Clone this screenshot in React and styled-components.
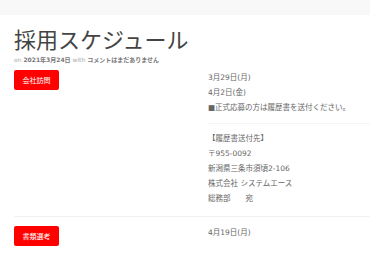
import React from 'react';
import styled, { createGlobalStyle } from 'styled-components';

const GlobalStyle = createGlobalStyle`
    body {
        margin: 0;
        background: #fff;
        font-family: "DejaVu Sans", "Noto Sans CJK JP", sans-serif;
        color: #666;
    }
`

const TopStrip = styled.div`
    height: 15px;
    background: #f8f8f8;
`

const Page = styled.div`
    padding-left: 14px;
`

const Title = styled.h1`
    margin: 9px 0 0;
    font-family: "Noto Sans CJK JP", sans-serif;
    font-size: 22px;
    line-height: 28px;
    font-weight: 400;
    color: #444;
`

const Meta = styled.div`
    margin-top: 3px;
    font-size: 6px;
    line-height: 10px;
    color: #aaa;

    b {
        font-weight: 700;
        color: #777;
    }
`

const Row = styled.div`
    display: grid;
    grid-template-columns: 194px 1fr;
    padding: ${p => p.$top}px 0 10px;
    border-top: ${p => p.$line ? '1px solid #f2f2f2' : 'none'};
`

const Badge = styled.span`
    display: flex;
    align-items: center;
    justify-content: center;
    width: 45px;
    height: 20px;
    margin-top: ${p => p.$offset}px;
    background: #ff0000;
    color: #fff;
    font-family: "Noto Sans CJK JP", sans-serif;
    font-size: 7px;
    border-radius: 2px;
`

const Cell = styled.div`
    font-size: 7.5px;
    line-height: 15px;
    color: #666;
`

const Block = styled.div`
    padding-bottom: ${p => p.$gap ? 8 : 0}px;
    margin-bottom: ${p => p.$gap ? 7 : 0}px;
    border-bottom: ${p => p.$gap ? '1px solid #f4f4f4' : 'none'};
`

const Line = styled.div`
    white-space: pre;
`

function App() {
    return (
        <>
            <GlobalStyle />
            <TopStrip />
            <Page>
                <Title>採用スケジュール</Title>
                <Meta>on <b>2021年3月24日</b> with <b>コメントはまだありません</b></Meta>
                <Row $top={5}>
                    <div><Badge $offset={0}>会社訪問</Badge></div>
                    <Cell>
                        <Block $gap>
                            <Line>3月29日(月)</Line>
                            <Line>4月2日(金)</Line>
                            <Line>■正式応募の方は履歴書を送付ください。</Line>
                        </Block>
                        <Block>
                            <Line>【履歴書送付先】</Line>
                            <Line>〒955-0092</Line>
                            <Line>新潟県三条市須頃2-106</Line>
                            <Line>株式会社 システムエース</Line>
                            <Line>総務部　　宛</Line>
                        </Block>
                    </Cell>
                </Row>
                <Row $top={8} $line>
                    <div><Badge $offset={1}>書類選考</Badge></div>
                    <Cell>
                        <Line>4月19日(月)</Line>
                    </Cell>
                </Row>
            </Page>
        </>
    );
}

export default App;
